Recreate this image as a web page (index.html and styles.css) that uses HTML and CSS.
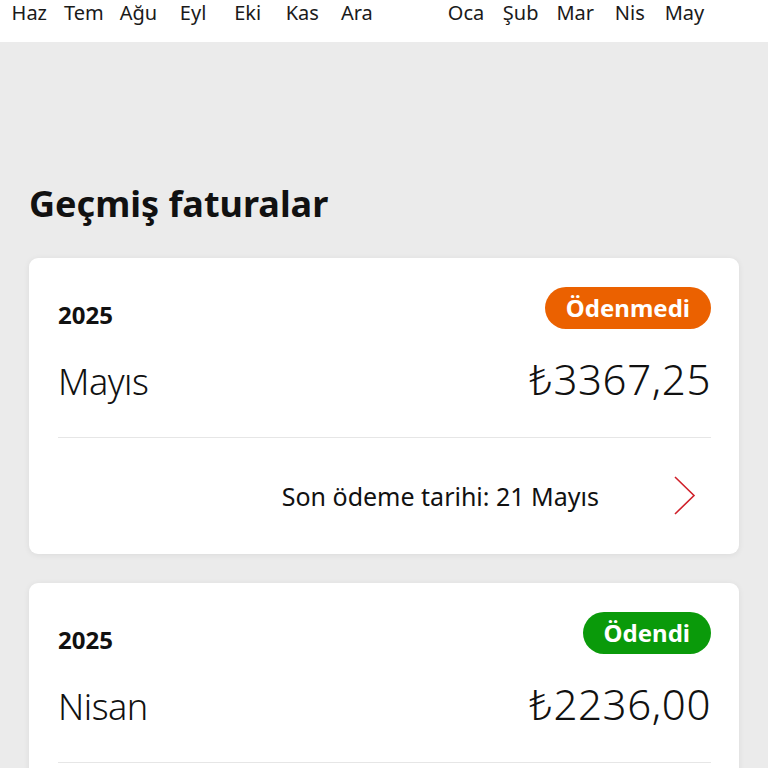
FILE: index.html
```html
<!DOCTYPE html>
<html lang="tr">
<head>
  <meta charset="UTF-8">
  <title>Geçmiş faturalar</title>
  <link rel="stylesheet" href="styles.css">
</head>
<body>

  <div class="months">
    <span>Haz</span>
    <span>Tem</span>
    <span>Ağu</span>
    <span>Eyl</span>
    <span>Eki</span>
    <span>Kas</span>
    <span>Ara</span>
    <span></span>
    <span>Oca</span>
    <span>Şub</span>
    <span>Mar</span>
    <span>Nis</span>
    <span>May</span>
  </div>

  <div class="history">
    <h1 class="title">Geçmiş faturalar</h1>

    <div class="bill">
      <div class="bill-top">
        <span class="year">2025</span>
        <span class="badge unpaid">Ödenmedi</span>
      </div>
      <div class="bill-main">
        <span class="month">Mayıs</span>
        <span class="amount">₺3367,25</span>
      </div>
      <div class="bill-foot">
        <span class="due">Son ödeme tarihi: 21 Mayıs</span>
        <svg class="chevron" width="24" height="40" viewBox="0 0 24 40">
          <path d="M2 1 L21 19.5 L2 38" fill="none" stroke="#d0202a" stroke-width="1.6"/>
        </svg>
      </div>
    </div>

    <div class="bill">
      <div class="bill-top">
        <span class="year">2025</span>
        <span class="badge paid">Ödendi</span>
      </div>
      <div class="bill-main">
        <span class="month">Nisan</span>
        <span class="amount">₺2236,00</span>
      </div>
      <div class="bill-foot">
        <span class="due">Son ödeme tarihi: 21 Nisan</span>
        <svg class="chevron" width="24" height="40" viewBox="0 0 24 40">
          <path d="M2 1 L21 19.5 L2 38" fill="none" stroke="#d0202a" stroke-width="1.6"/>
        </svg>
      </div>
    </div>
  </div>

</body>
</html>
```

FILE: styles.css
```css
body { margin: 0; background: #ebebeb; font-family: "Noto Sans", "Open Sans", sans-serif; color: #111; }

.months { display: grid; grid-template-columns: repeat(13, 54.6px); height: 40px; padding: 2px 0 0 2px; background: #fff; font-size: 20px; line-height: 22px; color: #1a1a1a; }
.months span { text-align: center; }

.history { padding: 0 29px 40px; }
.title { margin: 0; padding: 138px 0 30px; font-size: 36px; line-height: 48px; font-weight: 700; }

.bill { background: #fff; border-radius: 9px; padding: 29px 28px 0 29px; margin-bottom: 29px; box-shadow: 0 1px 6px rgba(0,0,0,0.07); }
.bill-top { display: flex; justify-content: space-between; align-items: flex-end; height: 42px; }
.year { font-size: 24px; font-weight: 700; line-height: 28px; }
.badge { display: inline-block; height: 42px; line-height: 42px; padding: 0 21px; border-radius: 21px; color: #fff; font-size: 24px; font-weight: 700; }
.unpaid { background: #eb6100; }
.paid { background: #0a9a0a; }

.bill-main { display: flex; justify-content: space-between; align-items: baseline; margin-top: 26px; padding-bottom: 31px; border-bottom: 1px solid #e6e6e6; line-height: 48px; }
.month { font-size: 36px; font-weight: 300; letter-spacing: -0.5px; }
.amount { font-size: 42px; font-weight: 300; letter-spacing: 0.6px; }

.bill-foot { display: flex; justify-content: flex-end; align-items: center; height: 116px; }
.due { font-size: 25px; }
.chevron { margin-left: 74px; margin-right: 14px; }
```
